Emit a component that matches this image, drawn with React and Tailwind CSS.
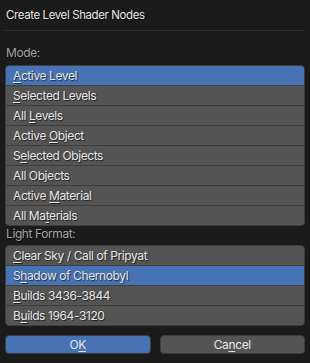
const modes = [
  { pre: "", key: "A", post: "ctive Level" },
  { pre: "", key: "S", post: "elected Levels" },
  { pre: "All ", key: "L", post: "evels" },
  { pre: "Active ", key: "O", post: "bject" },
  { pre: "S", key: "e", post: "lected Objects" },
  { pre: "All Ob", key: "j", post: "ects" },
  { pre: "Active ", key: "M", post: "aterial" },
  { pre: "All Ma", key: "t", post: "erials" },
];

const formats = [
  { pre: "", key: "C", post: "lear Sky / Call of Pripyat" },
  { pre: "S", key: "h", post: "adow of Chernobyl" },
  { pre: "", key: "B", post: "uilds 3436-3844" },
  { pre: "B", key: "u", post: "ilds 1964-3120" },
];

function Label({ item }) {
  return (
    <span>
      {item.pre}
      <span className="underline underline-offset-2 decoration-1">{item.key}</span>
      {item.post}
    </span>
  );
}

function List({ items, active }) {
  return (
    <div className="flex flex-col gap-px bg-[#3d3d3d] border border-[#3d3d3d] rounded-[4px] overflow-hidden">
      {items.map((item, i) => (
        <div
          key={i}
          className={
            "h-[19px] flex items-center pl-[7px] " +
            (i === active ? "bg-[#4772b3]" : "bg-[#545454]")
          }
        >
          <Label item={item} />
        </div>
      ))}
    </div>
  );
}

export default function App() {
  return (
    <div
      className="w-[310px] h-[363px] bg-[#1b1b1b] text-[#e6e6e6] text-[12px] tracking-[-0.4px] px-[5px] flex flex-col [text-shadow:1px_1px_1px_rgba(0,0,0,0.6)]"
      style={{ fontFamily: "Inter, 'DejaVu Sans', sans-serif" }}
    >
      <div className="h-[31px] flex items-center pl-px pt-px text-[11.5px] tracking-[-0.4px] border-b border-[#303030]">
        Create Level Shader Nodes
      </div>
      <div className="h-[34px] flex items-end pb-[3px] pl-px text-[#a3a3a3]">Mode:</div>
      <List items={modes} active={0} />
      <div className="h-[19px] flex items-end pb-[2px] pl-px text-[#a3a3a3]">Light Format:</div>
      <List items={formats} active={1} />
      <div className="flex gap-[9px] mt-[9px]">
        <button className="flex-1 h-[19px] rounded-[4px] bg-[#4772b3] border border-[#3d3d3d] flex items-center justify-center">
          O<span className="underline underline-offset-2 decoration-1">K</span>
        </button>
        <button className="flex-1 h-[19px] rounded-[4px] bg-[#545454] border border-[#3d3d3d] flex items-center justify-center">
          Ca<span className="underline underline-offset-2 decoration-1">n</span>cel
        </button>
      </div>
    </div>
  );
}
